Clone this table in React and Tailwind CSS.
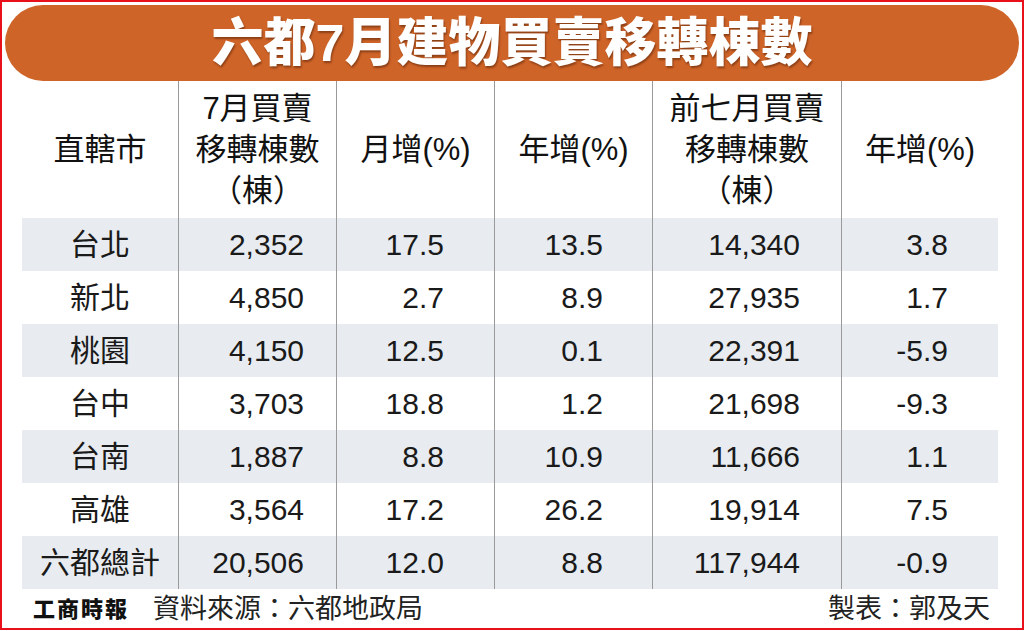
import React from 'react';

const FONT = { fontFamily: '"Liberation Sans", "Noto Sans CJK TC", sans-serif' };

const ROWS = [
  ['台北', '2,352', '17.5', '13.5', '14,340', '3.8'],
  ['新北', '4,850', '2.7', '8.9', '27,935', '1.7'],
  ['桃園', '4,150', '12.5', '0.1', '22,391', '-5.9'],
  ['台中', '3,703', '18.8', '1.2', '21,698', '-9.3'],
  ['台南', '1,887', '8.8', '10.9', '11,666', '1.1'],
  ['高雄', '3,564', '17.2', '26.2', '19,914', '7.5'],
  ['六都總計', '20,506', '12.0', '8.8', '117,944', '-0.9'],
];

// right padding per numeric column, so the figures line up as in the print
const PAD = ['', 'pr-[32px]', 'pr-[50px]', 'pr-[49px]', 'pr-[41px]', 'pr-[50px]'];
const GRID = 'grid grid-cols-[156px_158px_158px_158px_189px_157px]';

function HeadCell({ lines, first }) {
  return (
    <div className={`flex flex-col items-center justify-center text-[31px] leading-[41px] text-[#111] ${first ? '' : 'border-l border-[#9a9a9a]'}`}>
      {lines.map((l) => <span key={l}>{l}</span>)}
    </div>
  );
}

export default function App() {
  return (
    <div className="w-[1024px] h-[630px] border-2 border-[#e8101a] bg-white flex flex-col" style={FONT}>
      {/* Title bar */}
      <div className="mx-[3px] mt-[3px] h-[76px] rounded-full bg-[#cf6428] flex items-center justify-center">
        <h1 className="text-[52px] font-black text-white [text-shadow:1px_2px_2px_rgba(60,20,0,0.45)]">
          六都7月建物買賣移轉棟數
        </h1>
      </div>

      {/* Table */}
      <div className="ml-[20px] w-[976px]">
        <div className={`${GRID} h-[137px]`}>
          <HeadCell first lines={['直轄市']} />
          <HeadCell lines={['7月買賣', '移轉棟數', '（棟）']} />
          <HeadCell lines={['月增(%)']} />
          <HeadCell lines={['年增(%)']} />
          <HeadCell lines={['前七月買賣', '移轉棟數', '（棟）']} />
          <HeadCell lines={['年增(%)']} />
        </div>
        {ROWS.map((row, i) => (
          <div key={row[0]} className={`${GRID} h-[53px] ${i % 2 === 0 ? 'bg-[#e8ecf1]' : 'bg-white'}`}>
            {row.map((v, j) => (
              <div
                key={j}
                className={`flex items-center text-[30px] text-[#1a1a1a] ${j === 0 ? 'justify-center' : `justify-end border-l border-[#9a9a9a] ${PAD[j]}`}`}
              >
                {v}
              </div>
            ))}
          </div>
        ))}
      </div>

      {/* Footer */}
      <div className="flex items-center flex-1 pl-[31px] pr-[32px] pb-[2px]">
        <span className="text-[22px] font-black tracking-[2px] text-[#111]">工商時報</span>
        <span className="ml-[24px] text-[27px] text-[#222]">資料來源：六都地政局</span>
        <span className="ml-auto text-[27px] text-[#222]">製表：郭及天</span>
      </div>
    </div>
  );
}
